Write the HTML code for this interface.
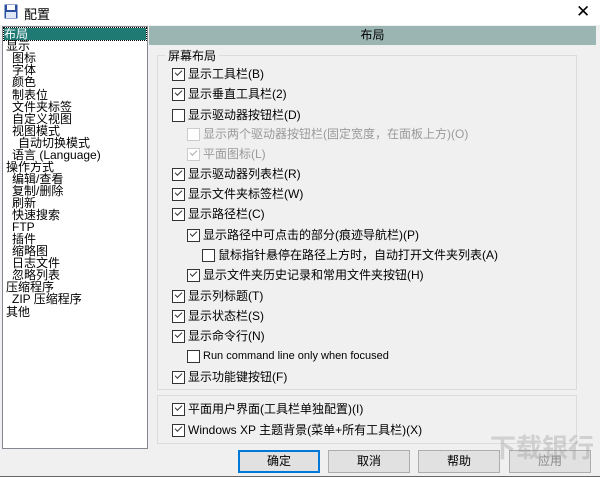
<!DOCTYPE html><html><head><meta charset="utf-8"><style>
*{margin:0;padding:0;box-sizing:border-box}
body{width:600px;height:477px;background:#f0f0f0;font-family:"Liberation Sans","Noto Sans CJK SC",sans-serif;font-size:12px;color:#000;position:relative;overflow:hidden;border-bottom:1px solid #666}
.title{position:absolute;left:0;top:0;width:600px;height:25px;background:#fff}
.abs{position:absolute;white-space:nowrap}
.tree{position:absolute;left:2px;top:26px;width:146px;height:423px;background:#fff;border:1px solid #828790}
.tree div{position:absolute;line-height:12px;font-size:12px;white-space:nowrap}
.hdr{position:absolute;left:149px;top:26px;width:447px;height:19px;background:#9bb5b2;text-align:center;line-height:19px}
.grp{position:absolute;border:1px solid #dcdcdc}
.cb{position:absolute;white-space:nowrap;line-height:14px;padding-left:16px}
.cb:before{content:"";position:absolute;left:0;top:1px;width:11px;height:11px;border:1px solid #333;background:#fff}
.cb.c:after{content:"";position:absolute;left:3px;top:3px;width:6px;height:3px;border-left:1.3px solid #333;border-bottom:1.3px solid #333;transform:rotate(-45deg)}
.cb.d{color:#9a9a9a}.cb.d:before{border-color:#ccc}.cb.d:after{border-color:#aaa}
.btn{position:absolute;top:450px;width:82px;height:23px;background:#e1e1e1;border:1px solid #adadad;text-align:center;line-height:21px}
</style></head><body>
<div class="title"></div>
<svg class="abs" style="left:4px;top:4px" width="14" height="15" viewBox="0 0 14 15"><rect x="0.5" y="0.5" width="13" height="14" fill="#2a4fa0"/><rect x="3" y="1" width="8" height="5" fill="#fff"/><rect x="2" y="8" width="10" height="6" fill="#dfe6f5"/></svg>
<div class="abs" style="left:24px;top:4px;font-size:13px">配置</div>
<div class="abs" style="left:576px;top:2px;font-size:17px;font-weight:300">✕</div>
<div class="tree">
<div style="left:1px;top:1px;width:142px;background:#1f7a74;color:#fff;outline:1px dotted #000">布局</div>
<div style="left:3px;top:13px">显示</div>
<div style="left:9px;top:25px">图标</div>
<div style="left:9px;top:37px">字体</div>
<div style="left:9px;top:49px">颜色</div>
<div style="left:9px;top:62px">制表位</div>
<div style="left:9px;top:74px">文件夹标签</div>
<div style="left:9px;top:86px">自定义视图</div>
<div style="left:9px;top:98px">视图模式</div>
<div style="left:15px;top:110px">自动切换模式</div>
<div style="left:9px;top:122px">语言 (Language)</div>
<div style="left:3px;top:134px">操作方式</div>
<div style="left:9px;top:146px">编辑/查看</div>
<div style="left:9px;top:158px">复制/删除</div>
<div style="left:9px;top:170px">刷新</div>
<div style="left:9px;top:182px">快速搜索</div>
<div style="left:9px;top:194px">FTP</div>
<div style="left:9px;top:206px">插件</div>
<div style="left:9px;top:218px">缩略图</div>
<div style="left:9px;top:230px">日志文件</div>
<div style="left:9px;top:242px">忽略列表</div>
<div style="left:3px;top:254px">压缩程序</div>
<div style="left:9px;top:266px">ZIP 压缩程序</div>
<div style="left:3px;top:279px">其他</div>
</div>
<div class="hdr">布局</div>
<div class="grp" style="left:157px;top:55px;width:420px;height:335px"></div>
<div class="abs" style="left:165px;top:47px;background:#f0f0f0;padding:0 3px">屏幕布局</div>
<div class="cb c" style="left:172px;top:67px">显示工具栏(B)</div>
<div class="cb c" style="left:172px;top:87px">显示垂直工具栏(2)</div>
<div class="cb" style="left:172px;top:108px">显示驱动器按钮栏(D)</div>
<div class="cb d" style="left:187px;top:127px">显示两个驱动器按钮栏(固定宽度，在面板上方)(O)</div>
<div class="cb d c" style="left:187px;top:147px">平面图标(L)</div>
<div class="cb c" style="left:172px;top:167px">显示驱动器列表栏(R)</div>
<div class="cb c" style="left:172px;top:187px">显示文件夹标签栏(W)</div>
<div class="cb c" style="left:172px;top:207px">显示路径栏(C)</div>
<div class="cb c" style="left:187px;top:228px">显示路径中可点击的部分(痕迹导航栏)(P)</div>
<div class="cb" style="left:202px;top:248px">鼠标指针悬停在路径上方时，自动打开文件夹列表(A)</div>
<div class="cb c" style="left:187px;top:268px">显示文件夹历史记录和常用文件夹按钮(H)</div>
<div class="cb c" style="left:172px;top:289px">显示列标题(T)</div>
<div class="cb c" style="left:172px;top:309px">显示状态栏(S)</div>
<div class="cb c" style="left:172px;top:329px">显示命令行(N)</div>
<div class="cb" style="left:187px;top:349px;font-size:11px">Run command line only when focused</div>
<div class="cb c" style="left:172px;top:370px">显示功能键按钮(F)</div>
<div class="grp" style="left:157px;top:395px;width:420px;height:49px"></div>
<div class="cb c" style="left:172px;top:402px">平面用户界面(工具栏单独配置)(I)</div>
<div class="cb c" style="left:172px;top:423px">Windows XP 主题背景(菜单+所有工具栏)(X)</div>
<div class="btn" style="left:238px;border:2px solid #0078d7;line-height:19px">确定</div>
<div class="btn" style="left:328px">取消</div>
<div class="btn" style="left:418px">帮助</div>
<div class="btn" style="left:509px;color:#888">应用</div>
<div class="abs" style="left:490px;top:428px;font-size:26px;font-weight:bold;color:rgba(150,150,150,.35)">下载银行</div>
</body></html>
